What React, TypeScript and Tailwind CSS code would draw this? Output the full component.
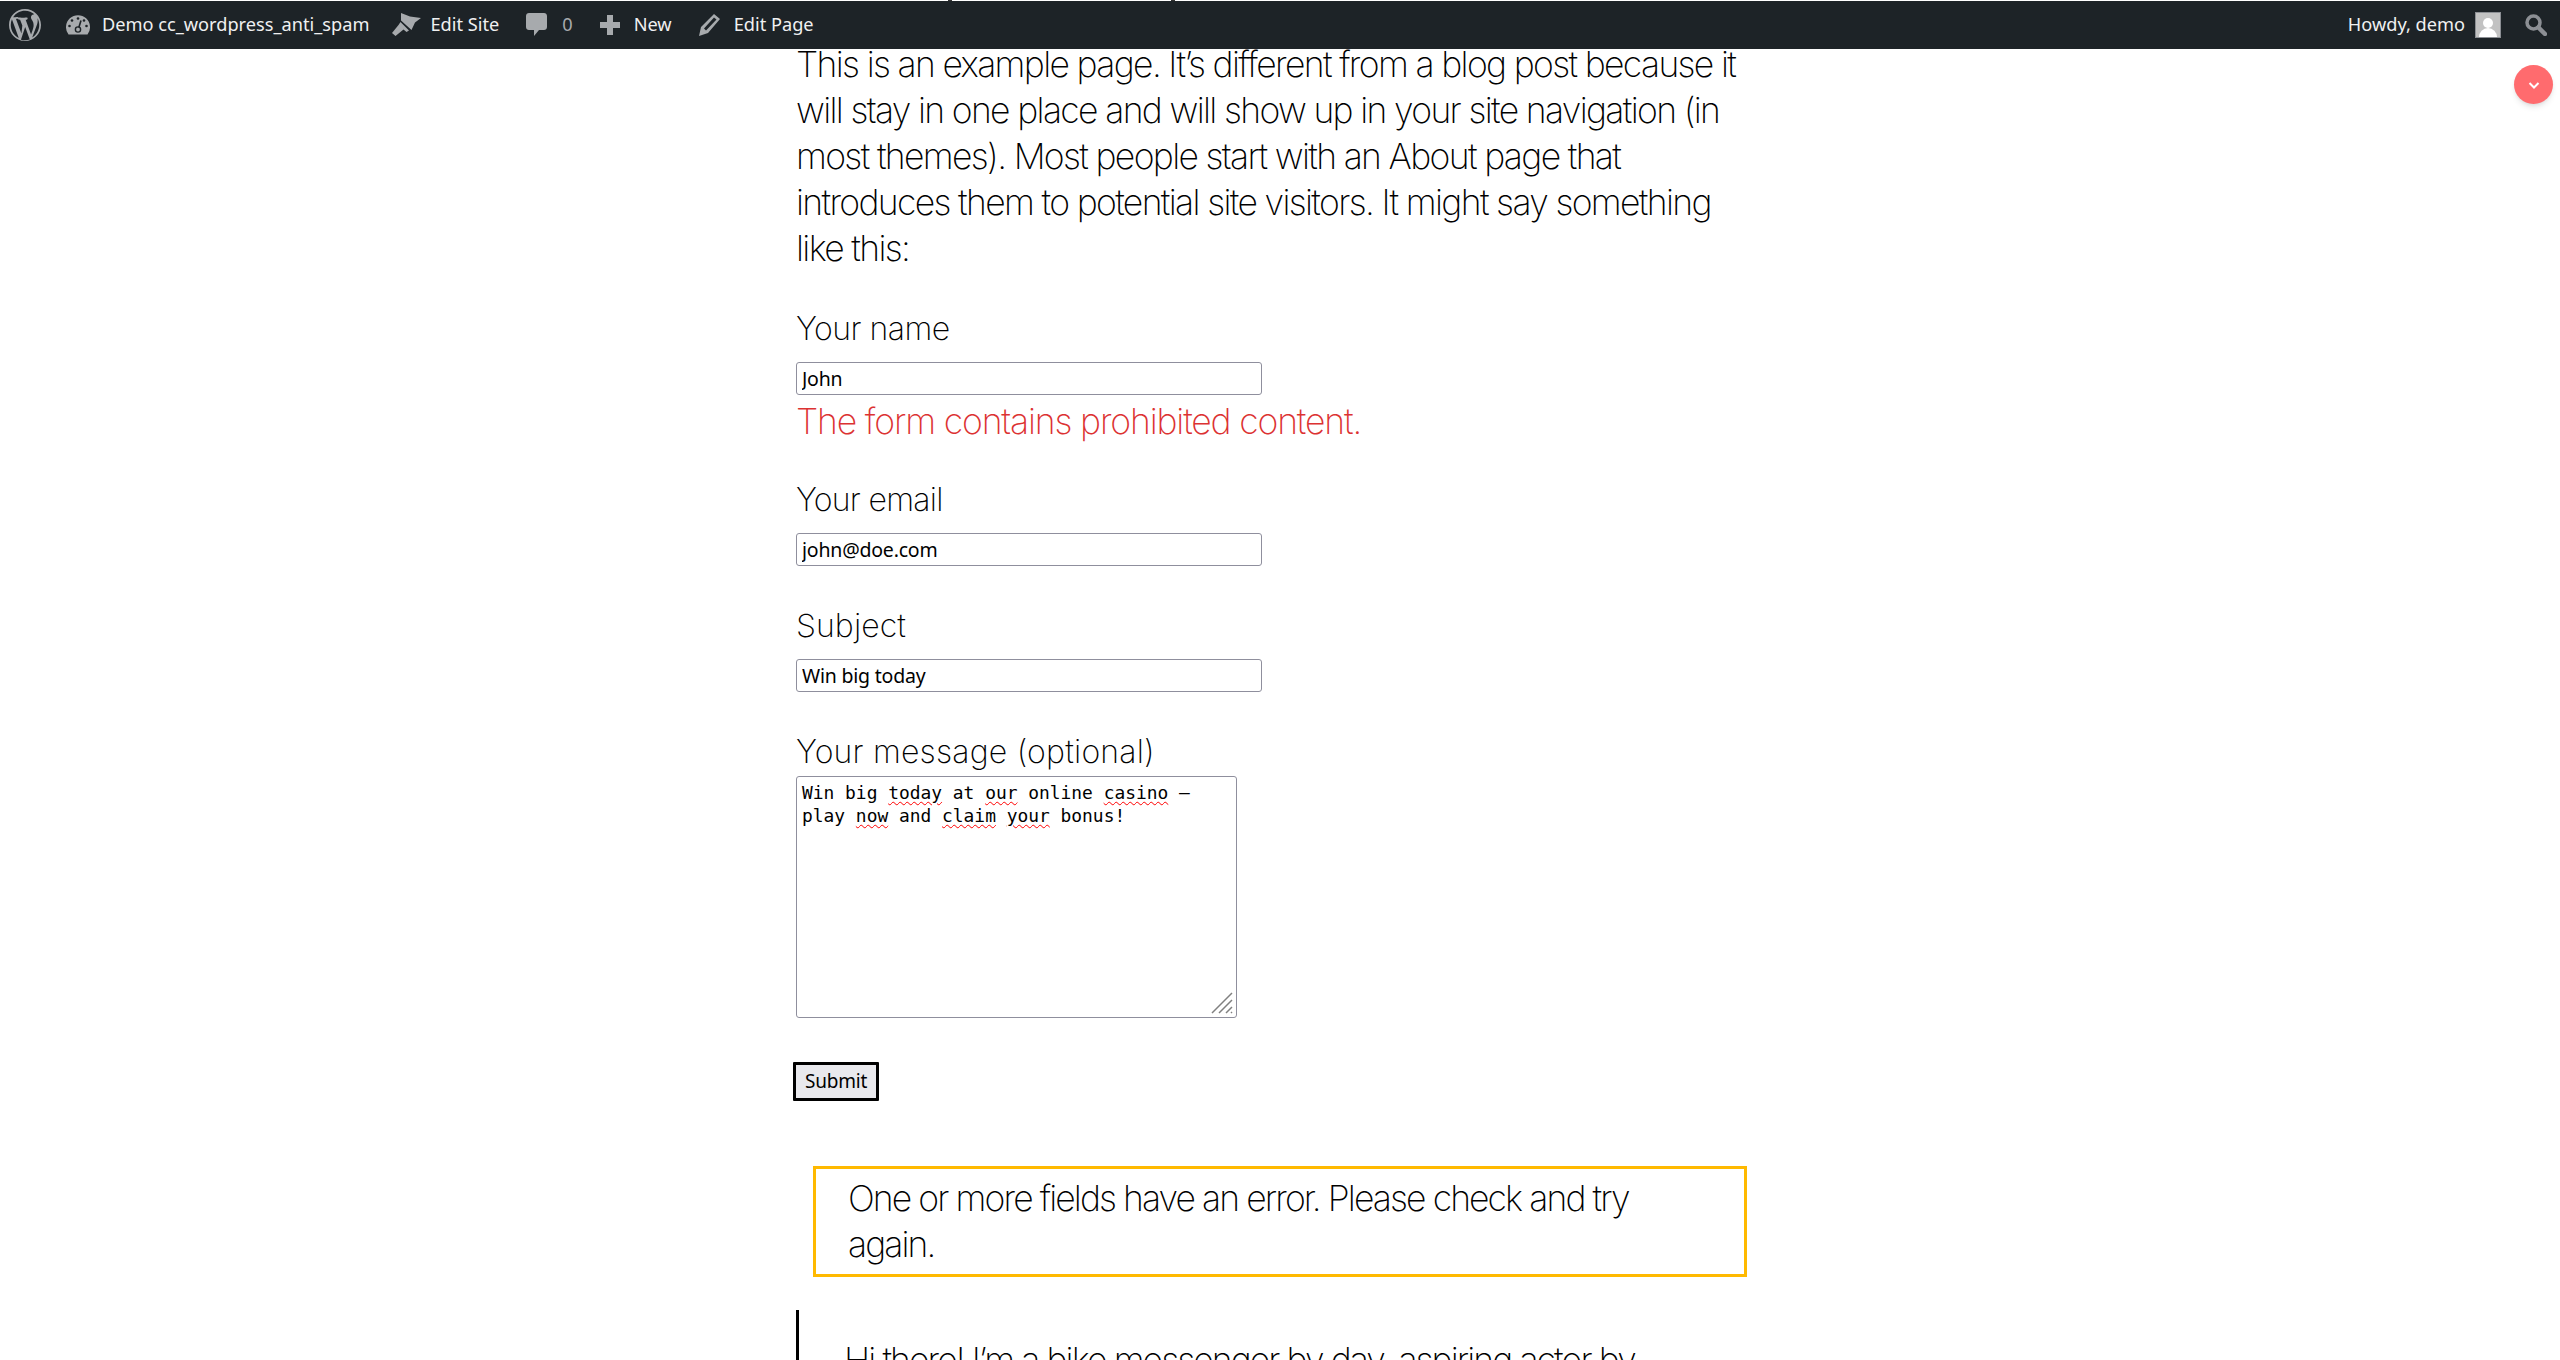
const bodyFont = "font-['Inter',sans-serif]";

function WpLogo() {
  return (
    <svg viewBox="0 0 20 20" className="w-[32px] h-[32px] fill-[#a7aaad]">
      <path d="M20 10c0-5.51-4.49-10-10-10C4.480 0 0 4.490 0 10c0 5.520 4.480 10 10 10 5.510 0 10-4.480 10-10zM7.780 15.370L4.370 6.220c.55-.02 1.170-.08 1.170-.08.5-.06.44-1.130-.06-1.110 0 0-1.450.11-2.370.11-.18 0-.37 0-.58-.01C4.120 2.690 6.890 1.050 10 1.050c2.320 0 4.430.87 6.030 2.320-.99-.14-2.310.65-2.310 1.860 0 .93.57 1.510 1.060 2.370.38.66.6 1.510.6 2.740 0 1.690-1.590 5.630-1.590 5.630l-3.380-9.220c.6-.02.91-.18.91-.18.5-.05.44-1.250-.06-1.220 0 0-1.600.12-2.630.12-.95 0-2.550-.12-2.550-.12-.5-.03-.56 1.200-.06 1.220l.92.08 1.380 3.740zM17.410 10c.24-.64.74-1.870.43-4.250.7 1.290 1.050 2.710 1.050 4.250 0 3.290-1.730 6.240-4.400 7.780.97-2.590 1.940-5.200 2.920-7.780zM6.100 18.090C3.120 16.650 1.110 13.530 1.110 10c0-1.300.23-2.480.72-3.580 1.420 3.890 2.850 7.780 4.270 11.670zm4.020-6.780l2.870 7.780c-.95.320-1.950.50-2.990.50-.87 0-1.720-.13-2.530-.37.900-2.650 1.760-5.260 2.650-7.910z" />
    </svg>
  );
}

function Dashboard() {
  return (
    <svg viewBox="0 0 24 20" className="w-[24px] h-[20px]">
      <path d="M2.500 19.500A12 12 0 1 1 21.500 19.500Z" fill="#a7aaad" />
      <circle cx="12" cy="3.500" r="1.300" fill="#1d2327" />
      <circle cx="6" cy="5.500" r="1.300" fill="#1d2327" />
      <circle cx="18" cy="5.500" r="1.300" fill="#1d2327" />
      <circle cx="3.500" cy="11" r="1.300" fill="#1d2327" />
      <circle cx="20.500" cy="11" r="1.300" fill="#1d2327" />
      <path d="M15 5.500L12.800 12.500" stroke="#1d2327" strokeWidth="1.600" />
      <circle cx="12" cy="14.500" r="2.600" fill="none" stroke="#1d2327" strokeWidth="1.400" />
    </svg>
  );
}

function Brush() {
  return (
    <svg viewBox="0 0 29 23" className="w-[29px] h-[23px] fill-[#a7aaad]">
      <path d="M9 0L18 3.500L29 5L23 9.500L19.500 17L9 7.500Z" />
      <path d="M8.500 9L17 17.500L14.500 19L11.500 16.500L3.500 23L0 20L6.500 12Z" />
    </svg>
  );
}

function Bubble() {
  return (
    <svg viewBox="0 0 21 23" className="w-[21px] h-[23px] fill-[#a7aaad]">
      <path d="M3 0H18C19.700 0 21 1.300 21 3V14C21 15.700 19.700 17 18 17H13L8 23V17H3C1.300 17 0 15.700 0 14V3C0 1.300 1.300 0 3 0Z" />
    </svg>
  );
}

function Plus() {
  return (
    <svg viewBox="0 0 20 20" className="w-[20px] h-[20px] fill-[#a7aaad]">
      <path d="M7 0H13V7H20V13H13V20H7V13H0V7H7Z" />
    </svg>
  );
}

function Pencil() {
  return (
    <svg viewBox="0 0 21 22" className="w-[21px] h-[22px] fill-[#a7aaad]">
      <path fillRule="evenodd" d="M15 0L21 5L9 19L0 22L2 13ZM15 3.500L5 14.500L7 16.500L17.500 5.500Z" />
    </svg>
  );
}

function SearchIcon() {
  return (
    <svg viewBox="0 0 22 22" className="w-[22px] h-[22px] fill-none stroke-[#8c8f94]">
      <circle cx="8.500" cy="8.500" r="6.500" strokeWidth="3.500" />
      <path d="M13.500 13.500L20 20" strokeWidth="4.500" strokeLinecap="round" />
    </svg>
  );
}

function AdminBar() {
  return (
    <div className="relative z-10 h-[49px] border-t border-t-white bg-[#1d2327] flex items-center justify-between font-['Noto_Sans',sans-serif] text-[18.2px] text-[#f0f0f1]">
      <span className="absolute -top-[1px] left-[948px] w-[4px] h-[1px] bg-[#333]" />
      <span className="absolute -top-[1px] left-[1171px] w-[4px] h-[1px] bg-[#333]" />
      <div className="flex items-center">
        <div className="ml-[9px] w-[32px] h-[32px]"><WpLogo /></div>
        <div className="ml-[25px] flex items-center gap-[12px]"><Dashboard /><span>Demo cc_wordpress_anti_spam</span></div>
        <div className="ml-[23px] flex items-center gap-[9px]"><Brush /><span>Edit Site</span></div>
        <div className="ml-[27px] flex items-center gap-[15px]"><Bubble /><span className="text-[#a7aaad]">0</span></div>
        <div className="ml-[27px] flex items-center gap-[14px]"><Plus /><span>New</span></div>
        <div className="ml-[27px] flex items-center gap-[14px]"><Pencil /><span>Edit Page</span></div>
      </div>
      <div className="flex items-center">
        <span>Howdy, demo</span>
        <div className="ml-[10px] w-[26px] h-[26px] bg-[#c2c2c2] border border-[#8c8f94] overflow-hidden flex flex-col items-center">
          <div className="mt-[5px] w-[10px] h-[11px] rounded-full bg-white" />
          <div className="w-[18px] h-[10px] rounded-t-full bg-white" />
        </div>
        <div className="ml-[24px] mr-[13px]"><SearchIcon /></div>
      </div>
    </div>
  );
}

function Field({ label, value, labelClass }: { label: string; value: string; labelClass: string }) {
  return (
    <div>
      <label className={`block text-[32px] leading-[46px] font-[250] ${labelClass}`}>{label}</label>
      <input
        readOnly
        value={value}
        className="mt-[10px] block w-[466px] h-[33px] px-[5px] border border-[#8f8f9d] rounded-[3px] font-['Noto_Sans',sans-serif] text-[19.5px] tracking-[-0.2px] text-black outline-none"
      />
    </div>
  );
}

function Squiggle({ children }: { children: string }) {
  return <span className="underline decoration-wavy decoration-[#ff0000] decoration-1 underline-offset-2">{children}</span>;
}

export default function App() {
  return (
    <div className={`relative h-[1360px] overflow-hidden bg-white text-black ${bodyFont}`}>
      <AdminBar />

      <button className="absolute top-[65px] right-[7px] w-[39px] h-[39px] rounded-full bg-[#ff6b6e] shadow-md flex items-center justify-center">
        <svg viewBox="0 0 14 14" className="w-[14px] h-[14px] fill-none stroke-white stroke-[2]">
          <path d="M2.500 5L7 9.500L11.500 5" />
        </svg>
      </button>

      <div className="ml-[796px] w-[952px]">
        <p className="-mt-[7px] text-[35.5px] leading-[46px] font-[250] tracking-[-1.65px]">
          This is an example page. It’s different from a blog post because it will stay in one place and will show up in your site navigation (in most themes). Most people start with an About page that introduces them to potential site visitors. It might say something like this:
        </p>

        <div className="mt-[34px]">
          <Field label="Your name" value="John" labelClass="tracking-[-0.5px]" />
          <div className="mt-[4px] text-[35.5px] leading-[46px] font-[250] tracking-[-1.15px] text-[#dc3232]">The form contains prohibited content.</div>
        </div>

        <div className="mt-[32px]"><Field label="Your email" value="john@doe.com" labelClass="tracking-[-0.7px]" /></div>
        <div className="mt-[37px]"><Field label="Subject" value="Win big today" labelClass="tracking-[0.1px]" /></div>

        <div className="mt-[37px]">
          <label className="block text-[32px] leading-[46px] font-[250] tracking-[0.2px]">Your message (optional)</label>
          <div className="relative mt-[1px] w-[441px] h-[242px] border border-[#8f8f9d] rounded-[3px] px-[5px] pt-[4px] font-['DejaVu_Sans_Mono',monospace] text-[17.9px] leading-[23px] text-black">
            <div>Win big <Squiggle>today</Squiggle> at <Squiggle>our</Squiggle> online <Squiggle>casino</Squiggle> –</div>
            <div>play <Squiggle>now</Squiggle> and <Squiggle>claim</Squiggle> <Squiggle>your</Squiggle> bonus!</div>
            <svg viewBox="0 0 22 22" className="absolute right-[3px] bottom-[3px] w-[22px] h-[22px] stroke-[#808080] stroke-[1.5]">
              <path d="M1 21L21 1M8 21L21 8M15 21l6-6M20 21l1-1" />
            </svg>
          </div>
        </div>

        <button className="-ml-[3px] mt-[44px] block h-[39px] w-[86px] border-[3px] border-black bg-[#e9e9ed] rounded-[1px] font-['Noto_Sans',sans-serif] text-[19px] tracking-[-0.2px] text-black">
          Submit
        </button>

        <div className="ml-[17px] mt-[65px] h-[111px] w-[934px] border-[3px] border-[#ffb900] pl-[32px] pr-[30px] py-[7px] text-[35.5px] leading-[46px] font-[250] tracking-[-1.9px]">
          One or more fields have an error. Please check and try again.
        </div>

        <div className="mt-[33px] border-l-[3px] border-black pl-[45px] pt-[28px] text-[35.5px] leading-[46px] font-[250] tracking-[-1.9px] whitespace-nowrap">
          Hi there! I’m a bike messenger by day, aspiring actor by
        </div>
      </div>
    </div>
  );
}
